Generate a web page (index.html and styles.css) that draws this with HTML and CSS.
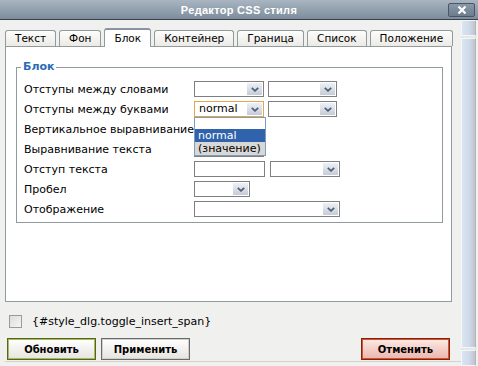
FILE: index.html
```html
<!DOCTYPE html>
<html lang="ru">
<head>
  <meta charset="UTF-8">
  <title>Редактор CSS стиля</title>
  <link rel="stylesheet" href="styles.css">
</head>
<body>
  <div class="titlebar">
    <span></span>
    <span class="title">Редактор CSS стиля</span>
    <span class="close">
      <svg viewBox="0 0 10 8" width="10" height="8"><path d="M1.5 0.5L8.5 7.5M8.5 0.5L1.5 7.5" stroke="#fff" stroke-width="2.2" fill="none"/></svg>
    </span>
  </div>

  <div class="window">
    <div class="main">
      <div class="tabs">
        <div class="tab">Текст</div>
        <div class="tab">Фон</div>
        <div class="tab active">Блок</div>
        <div class="tab">Контейнер</div>
        <div class="tab">Граница</div>
        <div class="tab">Список</div>
        <div class="tab">Положение</div>
      </div>

      <div class="panel">
        <fieldset class="group">
          <legend>Блок</legend>

          <div class="row">
            <span class="label">Отступы между словами</span>
            <div class="fields">
              <div class="select w70"><span class="value"></span><span class="arrow"><svg viewBox="0 0 8 5" width="8" height="5"><path d="M0.8 0.8L4 3.8L7.2 0.8" stroke="#4e5f7a" stroke-width="1.8" fill="none"/></svg></span></div>
              <div class="select w69"><span class="value"></span><span class="arrow"><svg viewBox="0 0 8 5" width="8" height="5"><path d="M0.8 0.8L4 3.8L7.2 0.8" stroke="#4e5f7a" stroke-width="1.8" fill="none"/></svg></span></div>
            </div>
          </div>

          <div class="row">
            <span class="label">Отступы между буквами</span>
            <div class="fields">
              <div class="dropdown">
                <div class="select w70 focused"><span class="value">normal</span><span class="arrow"><svg viewBox="0 0 8 5" width="8" height="5"><path d="M0.8 0.8L4 3.8L7.2 0.8" stroke="#4e5f7a" stroke-width="1.8" fill="none"/></svg></span></div>
                <ul class="options">
                  <li class="blank"></li>
                  <li class="selected">normal</li>
                  <li class="other">(значение)</li>
                </ul>
              </div>
              <div class="select w69"><span class="value"></span><span class="arrow"><svg viewBox="0 0 8 5" width="8" height="5"><path d="M0.8 0.8L4 3.8L7.2 0.8" stroke="#4e5f7a" stroke-width="1.8" fill="none"/></svg></span></div>
            </div>
          </div>

          <div class="row">
            <span class="label">Вертикальное выравнивание</span>
            <div class="fields">
              <div class="select w70"><span class="value"></span><span class="arrow"></span></div>
            </div>
          </div>

          <div class="row">
            <span class="label">Выравнивание текста</span>
            <div class="fields">
              <div class="select w70"><span class="value"></span><span class="arrow"></span></div>
            </div>
          </div>

          <div class="row">
            <span class="label">Отступ текста</span>
            <div class="fields">
              <div class="input w71"></div>
              <div class="select w70 gap5"><span class="value"></span><span class="arrow"><svg viewBox="0 0 8 5" width="8" height="5"><path d="M0.8 0.8L4 3.8L7.2 0.8" stroke="#4e5f7a" stroke-width="1.8" fill="none"/></svg></span></div>
            </div>
          </div>

          <div class="row">
            <span class="label">Пробел</span>
            <div class="fields">
              <div class="select w56"><span class="value"></span><span class="arrow"><svg viewBox="0 0 8 5" width="8" height="5"><path d="M0.8 0.8L4 3.8L7.2 0.8" stroke="#4e5f7a" stroke-width="1.8" fill="none"/></svg></span></div>
            </div>
          </div>

          <div class="row">
            <span class="label">Отображение</span>
            <div class="fields">
              <div class="select w146"><span class="value"></span><span class="arrow"><svg viewBox="0 0 8 5" width="8" height="5"><path d="M0.8 0.8L4 3.8L7.2 0.8" stroke="#4e5f7a" stroke-width="1.8" fill="none"/></svg></span></div>
            </div>
          </div>
        </fieldset>
      </div>

      <div class="toggle">
        <span class="checkbox"></span>
        <span>{#style_dlg.toggle_insert_span}</span>
      </div>

      <div class="buttons">
        <button class="btn update">Обновить</button>
        <button class="btn apply">Применить</button>
        <button class="btn cancel">Отменить</button>
      </div>
      <div class="footer-line"></div>
    </div>

    <div class="scrollbar">
      <div class="sb-btn"></div>
      <div class="sb-thumb"></div>
      <div class="sb-btn"></div>
    </div>
  </div>
</body>
</html>
```

FILE: styles.css
```css
body {
  margin: 0;
  width: 478px;
  height: 366px;
  overflow: hidden;
  background: #f0f0ee;
  font-family: 'DejaVu Sans', Verdana, sans-serif;
  font-size: 11px;
  color: #000;
}
.titlebar {
  height: 19px;
  display: grid;
  grid-template-columns: 30px 1fr 30px;
  align-items: center;
  background: linear-gradient(#a9b5c1, #7d8d9d);
  border-bottom: 1px solid #36414c;
}
.titlebar .title {
  text-align: center;
  color: #fff;
  font-family: 'Liberation Sans', Arial, sans-serif;
  font-weight: bold;
  font-size: 11px;
  letter-spacing: 0.3px;
}
.close {
  width: 27px;
  height: 14px;
  box-sizing: border-box;
  border: 1px solid #4a5663;
  border-radius: 2px;
  background: linear-gradient(#8a99a8, #6d7d8d);
  display: flex;
  align-items: center;
  justify-content: center;
  justify-self: start;
}
.window {
  display: flex;
}
.main {
  width: 461px;
  box-sizing: border-box;
  padding-left: 5px;
}

/* tabs */
.tabs {
  display: flex;
  align-items: flex-end;
  gap: 3px;
  margin-top: 8px;
  height: 18px;
  position: relative;
  z-index: 1;
}
.tab {
  height: 16px;
  box-sizing: border-box;
  padding: 0 9px;
  font-size: 10.5px;
  line-height: 15px;
  border: 1px solid #919b9c;
  border-bottom: none;
  border-radius: 3px 3px 0 0;
  background: linear-gradient(#fdfdfc, #ebeae5);
}
.tab.active {
  height: 19px;
  margin-bottom: -1px;
  line-height: 17px;
  background: #fff;
  border-top: 2px solid #8795a3;
}

/* panel */
.panel {
  width: 447px;
  height: 256px;
  box-sizing: border-box;
  border: 1px solid #919b9c;
  background: #fff;
  padding-top: 13px;
}
.group {
  width: 427px;
  box-sizing: border-box;
  margin: 0 0 0 10px;
  padding: 5px 7px 3px;
  border: 1px solid #919b9c;
  min-width: 0;
}
.group legend {
  margin-left: -3px;
  padding: 0 2px;
  line-height: 14px;
  color: #2b6ab4;
  font-weight: bold;
}
.row {
  display: grid;
  grid-template-columns: 170px auto;
  align-items: center;
  height: 20px;
}
.fields {
  display: flex;
  gap: 4px;
}

.select, .input {
  height: 16px;
  box-sizing: border-box;
  border: 1px solid #7f7f7f;
  background: #fff;
  display: flex;
}
.w56 { width: 56px; }
.w69 { width: 69px; }
.w70 { width: 70px; }
.w71 { width: 71px; }
.w146 { width: 146px; }
.gap5 { margin-left: 1px; }
.select .value {
  flex: 1;
  padding-left: 4px;
  line-height: 14px;
}
.select .arrow {
  width: 15px;
  margin: 1px;
  background: linear-gradient(#eef1f6, #c5ccd6);
  display: flex;
  align-items: center;
  justify-content: center;
}
.select.focused {
  border-color: #e3a64c;
}

/* open list */
.dropdown {
  position: relative;
}
.options {
  position: absolute;
  top: 16px;
  left: 0;
  z-index: 2;
  width: 72px;
  box-sizing: border-box;
  margin: 0;
  padding: 0;
  list-style: none;
  border: 1px solid #7f9db9;
  background: #fff;
}
.options li {
  height: 13px;
  line-height: 13px;
  padding-left: 3px;
}
.options .blank { height: 11px; }
.options .selected {
  background: #3163ad;
  color: #fff;
}
.options .other {
  background: #d8d8d6;
}

/* checkbox */
.toggle {
  display: flex;
  align-items: center;
  gap: 10px;
  margin: 13px 0 0 4px;
  height: 13px;
}
.checkbox {
  width: 13px;
  height: 13px;
  box-sizing: border-box;
  border: 1px solid #9a9a9a;
  background: linear-gradient(135deg, #dcdcd8, #f6f6f4);
}

/* buttons */
.buttons {
  display: flex;
  gap: 5px;
  margin-top: 10px;
  padding: 0 11px 0 2px;
}
.btn {
  width: 89px;
  height: 22px;
  box-sizing: border-box;
  font-family: 'DejaVu Sans', Verdana, sans-serif;
  font-size: 10px;
  font-weight: bold;
  color: #000;
  background: linear-gradient(#ffffff, #e6e4de);
  border: 1px solid #555;
  padding: 0;
}
.btn.update {
  border-color: #56661c;
  box-shadow: inset 0 0 0 1px #a9b85c;
}
.btn.apply {
  border-color: #6a6a6a;
  box-shadow: inset 0 0 0 1px #d0d0cc;
}
.btn.cancel {
  margin-left: auto;
  border-color: #7e2410;
  box-shadow: inset 0 0 0 1px #d4502e;
  background: linear-gradient(#fde9e4, #ebb6ab);
}
.footer-line {
  margin-top: 1px;
  border-top: 1px solid #d6d2c8;
}

/* scrollbar strip */
.scrollbar {
  width: 15px;
  height: 346px;
  display: flex;
  flex-direction: column;
  gap: 2px;
  background: #e6e6e6;
}
.sb-btn, .sb-thumb {
  box-sizing: border-box;
  border: 1px solid #f4f6fa;
  border-right-color: #b4b4bc;
  background: linear-gradient(90deg, #dbe5f2, #cfdbeb 55%, #c2c2ca);
}
.sb-btn { height: 16px; }
.sb-thumb { flex: 1; }
```
